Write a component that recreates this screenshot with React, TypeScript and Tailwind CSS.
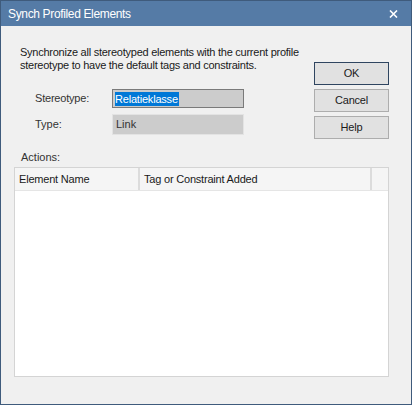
import { FC } from "react";

const font = { fontFamily: '"Liberation Sans", Arial, sans-serif' };

const DialogButton: FC<{ label: string; primary?: boolean }> = ({ label, primary }) => (
  <button
    className={`h-[23px] w-[75px] bg-[#e1e1e1] text-[11px] tracking-[-0.2px] text-[#1a1a1a] ${
      primary ? "border border-[#2f4560]" : "border border-[#adadad]"
    }`}
  >
    {label}
  </button>
);

export default function App() {
  return (
    <div className="flex h-[405px] w-[412px] flex-col border border-[#3f5b7c] bg-[#f0f0f0]" style={font}>
      {/* title bar */}
      <div className="flex h-[25px] items-center justify-between bg-[#557ba6] pl-[7px] pr-[13px]">
        <span className="text-[12px] tracking-[-0.35px] text-white">Synch Profiled Elements</span>
        <svg width="9" height="8" viewBox="0 0 9 8" className="mt-[1px]">
          <path d="M1 0.5 L8 7.5 M8 0.5 L1 7.5" stroke="white" strokeWidth="1.6" />
        </svg>
      </div>

      <div className="flex flex-1 flex-col">
        <div className="flex">
          <div className="ml-[19px] mt-[20px] w-[285px]">
            <p className="whitespace-nowrap text-[11px] leading-[13px] tracking-[-0.25px] text-[#1a1a1a]">
              Synchronize all stereotyped elements with the current profile
              <br />
              stereotype to have the default tags and constraints.
            </p>
            <div className="mt-[17px] flex items-center">
              <span className="ml-[15px] w-[77px] text-[11px] tracking-[-0.2px] text-[#333]">Stereotype:</span>
              <div className="flex h-[19px] w-[132px] items-center border border-[#7a7a7a] bg-[#cccccc] pl-[2px]">
                <span className="bg-[#0078d7] pr-[1px] text-[11px] leading-[14px] tracking-[-0.2px] text-white">
                  Relatieklasse
                </span>
              </div>
            </div>
            <div className="mt-[6px] flex items-center">
              <span className="ml-[15px] w-[77px] text-[11px] text-[#333]">Type:</span>
              <div className="flex h-[21px] w-[132px] items-center border border-[#e3e3e3] bg-[#cccccc] pl-[3px]">
                <span className="text-[11px] text-[#333]">Link</span>
              </div>
            </div>
          </div>
          <div className="ml-auto mr-[22px] mt-[36px] flex flex-col gap-[4px]">
            <DialogButton label="OK" primary />
            <DialogButton label="Cancel" />
            <DialogButton label="Help" />
          </div>
        </div>

        <div className="ml-[20px] mt-[12px] text-[11px] leading-[13px] text-[#333]">Actions:</div>

        <div className="ml-[13px] mt-[3px] flex h-[210px] w-[375px] flex-col border border-[#d4d4d4] bg-white">
          <div className="flex h-[23px] border-b border-[#e5e5e5] bg-[#f5f5f5] text-[11px] tracking-[-0.2px] text-[#1a1a1a]">
            <div className="flex w-[125px] items-center border-r-2 border-[#dcdcdc] pl-[4px]">Element Name</div>
            <div className="flex w-[232px] items-center border-r-2 border-[#dcdcdc] pl-[4px]">
              Tag or Constraint Added
            </div>
            <div className="flex-1" />
          </div>
        </div>
      </div>
    </div>
  );
}
